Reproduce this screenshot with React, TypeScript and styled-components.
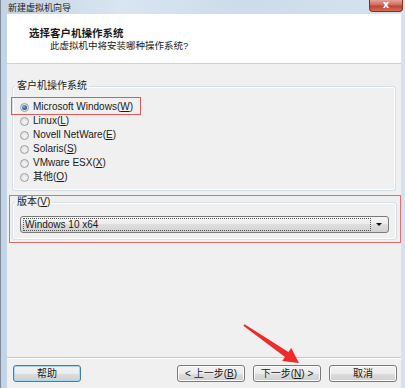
import styled, { createGlobalStyle } from "styled-components";

const GlobalStyle = createGlobalStyle`
  html, body {
    margin: 0;
    padding: 0;
    background: #dbe6f2;
  }
  * {
    box-sizing: border-box;
  }
`;

const osOptions = [
  { label: "Microsoft Windows", key: "W", checked: true },
  { label: "Linux", key: "L" },
  { label: "Novell NetWare", key: "E" },
  { label: "Solaris", key: "S" },
  { label: "VMware ESX", key: "X" },
  { label: "其他", key: "O" },
];

function RedArrow() {
  return (
    <ArrowLayer width="405" height="388" viewBox="0 0 405 388">
      <polygon
        points="243.6,324.2 287.4,352 290.2,347.9 298,363 281.2,361.1 284,357 242.4,325.8"
        fill="#ee2a2a"
      />
    </ArrowLayer>
  );
}

function App() {
  return (
    <>
      <GlobalStyle />
      <Window>
        <TitleBar>
          <TitleText>新建虚拟机向导</TitleText>
          <CloseButton>x</CloseButton>
        </TitleBar>
        <Client>
          <Header>
            <HeaderTitle>选择客户机操作系统</HeaderTitle>
            <HeaderSub>此虚拟机中将安装哪种操作系统?</HeaderSub>
          </Header>
          <Body>
            <GroupBox>
              <Legend>客户机操作系统</Legend>
              <RadioList>
                {osOptions.map((opt) => (
                  <RadioRow key={opt.key} highlight={!!opt.checked}>
                    <RadioDot checked={!!opt.checked} />
                    <span>
                      {opt.label}(<u>{opt.key}</u>)
                    </span>
                  </RadioRow>
                ))}
              </RadioList>
            </GroupBox>
            <Highlight>
              <GroupBox>
                <Legend>
                  版本(<u>V</u>)
                </Legend>
                <Combo>
                  <ComboValue>Windows 10 x64</ComboValue>
                  <ComboArrow />
                </Combo>
              </GroupBox>
            </Highlight>
          </Body>
          <Footer>
            <Button focused>帮助</Button>
            <Spacer />
            <Button>
              &lt; 上一步(<u>B</u>)
            </Button>
            <Button>
              下一步(<u>N</u>) &gt;
            </Button>
            <Button>取消</Button>
          </Footer>
        </Client>
        <RedArrow />
      </Window>
    </>
  );
}

export default App;

const Window = styled.div`
  position: relative;
  width: 405px;
  height: 388px;
  display: flex;
  flex-direction: column;
  overflow: hidden;
  border-left: 1px solid #7d8c9c;
  background: linear-gradient(
    to right,
    #c4d3e3 0%,
    #d9e5f1 30%,
    #cddbea 60%,
    #d6e2ef 100%
  );
  font-family: "Liberation Sans", "Noto Sans CJK SC", sans-serif;
  font-size: 10px;
  color: #1a1a1a;
`;

const TitleBar = styled.div`
  height: 14px;
  display: flex;
  justify-content: space-between;
  align-items: flex-start;
  padding-left: 7px;
`;

const TitleText = styled.div`
  font-size: 9px;
  line-height: 13px;
  padding-top: 2px;
  color: #222;
`;

const CloseButton = styled.div`
  width: 34px;
  height: 12px;
  margin-right: 2px;
  border: 1px solid #7a2e24;
  border-top: none;
  border-radius: 0 0 4px 4px;
  background: linear-gradient(#e4a397 0%, #d06a5c 45%, #c2412f 55%, #d0705c 100%);
  color: #fff;
  font-family: "DejaVu Sans", sans-serif;
  font-weight: bold;
  font-size: 10px;
  line-height: 10px;
  text-align: center;
`;

const Client = styled.div`
  flex: 1;
  margin: 0 4px 0 6px;
  background: #f0f0f0;
  display: flex;
  flex-direction: column;
`;

const Header = styled.div`
  height: 50px;
  background: #fff;
  padding: 12px 0 0 22px;
  border-bottom: 1px solid #cfcfcf;
`;

const HeaderTitle = styled.div`
  font-weight: bold;
  font-size: 10.5px;
  line-height: 14px;
`;

const HeaderSub = styled.div`
  font-size: 9.5px;
  line-height: 12px;
  padding-left: 21px;
`;

const Body = styled.div`
  padding: 16px 5px 0 5px;
  display: flex;
  flex-direction: column;
`;

const GroupBox = styled.fieldset`
  margin: 0;
  min-width: 0;
  padding: 0 0 6px 0;
  border: 1px solid #d5dfe5;
  border-radius: 3px;
  box-shadow: inset 0 0 0 1px #fff;
`;

const Legend = styled.legend`
  margin-left: 2px;
  padding: 0 2px;
  line-height: 12px;
  font-size: 10px;
`;

const RadioList = styled.div`
  padding: 8px 0 0 7px;
  display: flex;
  flex-direction: column;
  align-items: flex-start;
`;

const RadioRow = styled.div<{ highlight: boolean }>`
  position: relative;
  display: inline-flex;
  align-items: center;
  gap: 4px;
  height: 14px;
  line-height: 14px;

  ${(p) =>
    p.highlight &&
    `
    &::after {
      content: "";
      position: absolute;
      top: -3px;
      bottom: -1px;
      left: -9px;
      right: -8px;
      border: 1.5px solid #e05a5a;
    }
  `}
`;

const RadioDot = styled.span<{ checked: boolean }>`
  width: 9px;
  height: 9px;
  border-radius: 50%;
  border: 1px solid #9a9fa4;
  background: radial-gradient(circle at 50% 60%, #f4f4f4 0%, #dcdcdc 100%);
  display: inline-flex;
  align-items: center;
  justify-content: center;

  &::before {
    content: "";
    width: 5px;
    height: 5px;
    border-radius: 50%;
    background: ${(p) =>
      p.checked
        ? "radial-gradient(circle at 40% 35%, #7fb3e0 0%, #2b5f94 60%, #1c3f68 100%)"
        : "transparent"};
  }
`;

const Highlight = styled.div`
  margin: 4px -5px 0 -3px;
  padding: 0 3px 2px 2px;
  border: 1.5px solid #e07070;
`;

const Combo = styled.div`
  margin: 8px 7px 0 7px;
  height: 17px;
  display: flex;
  align-items: center;
  padding: 0 2px;
  border: 1px solid #7a7a7a;
  border-radius: 3px;
  background: linear-gradient(#f4f4f4 0%, #ececec 50%, #dedede 50%, #d2d2d2 100%);
`;

const ComboValue = styled.div`
  flex: 1;
  height: 13px;
  line-height: 12px;
  padding-left: 1px;
  border: 1px dotted #555;
`;

const ComboArrow = styled.div`
  width: 15px;
  display: flex;
  justify-content: center;

  &::before {
    content: "";
    border-left: 3px solid transparent;
    border-right: 3px solid transparent;
    border-top: 3px solid #111;
  }
`;

const Footer = styled.div`
  margin-top: auto;
  height: 31px;
  border-top: 1px solid #c8c8c8;
  box-shadow: inset 0 1px 0 #fff;
  display: flex;
  align-items: flex-start;
  gap: 8px;
  padding: 7px 4px 0 6px;
`;

const Spacer = styled.div`
  flex: 1;
`;

const Button = styled.div<{ focused?: boolean }>`
  width: 68px;
  height: 17px;
  line-height: 15px;
  text-align: center;
  border-radius: 3px;
  border: 1px solid ${(p) => (p.focused ? "#3c7fb1" : "#7a7a7a")};
  box-shadow: ${(p) => (p.focused ? "inset 0 0 0 1px #a9d6f5" : "inset 0 0 0 1px #fbfbfb")};
  background: linear-gradient(#f4f4f4 0%, #ebebeb 50%, #dddddd 50%, #d0d0d0 100%);
  font-size: 10px;
`;

const ArrowLayer = styled.svg`
  position: absolute;
  left: 0;
  top: 0;
  pointer-events: none;
`;
